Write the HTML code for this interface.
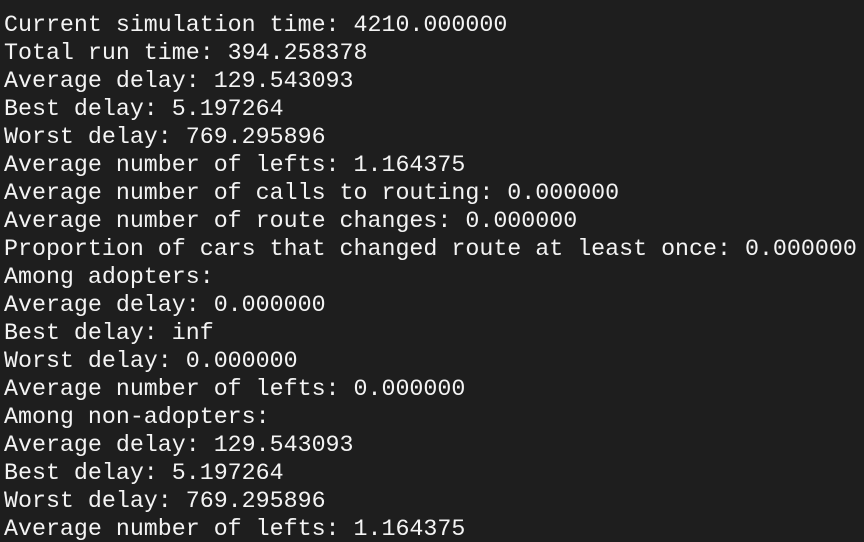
<!DOCTYPE html>
<html><head><style>
html,body{margin:0;padding:0;background:#1e1e1e;width:864px;height:542px;overflow:hidden}
pre{margin:0;padding:11px 0 0 4px;font-family:"Liberation Mono",monospace;font-size:23.3px;line-height:28px;color:#f4f4f4}
</style></head><body><pre>Current simulation time: 4210.000000
Total run time: 394.258378
Average delay: 129.543093
Best delay: 5.197264
Worst delay: 769.295896
Average number of lefts: 1.164375
Average number of calls to routing: 0.000000
Average number of route changes: 0.000000
Proportion of cars that changed route at least once: 0.000000
Among adopters:
Average delay: 0.000000
Best delay: inf
Worst delay: 0.000000
Average number of lefts: 0.000000
Among non-adopters:
Average delay: 129.543093
Best delay: 5.197264
Worst delay: 769.295896
Average number of lefts: 1.164375</pre></body></html>
